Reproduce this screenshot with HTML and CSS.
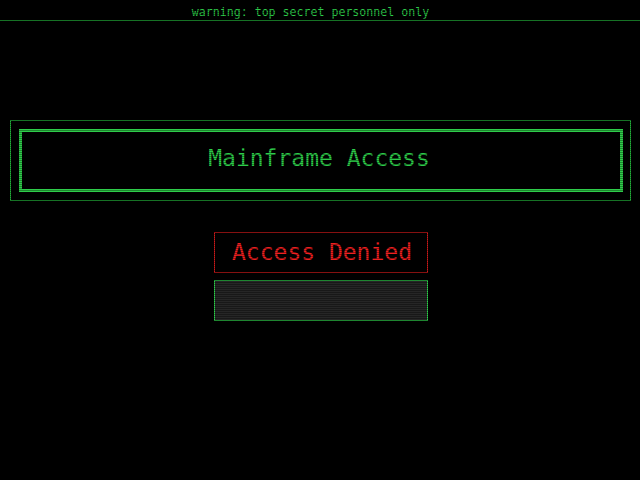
FILE: index.html
```html
<!DOCTYPE html>
<html lang="en">
<head>
<meta charset="utf-8">
<title>Mainframe Access</title>
<link rel="stylesheet" href="styles.css">
</head>
<body>
<div class="screen">
  <header class="warning">warning: top secret personnel only</header>
  <section class="frame">
    <div class="frame-inner">
      <h1 class="title">Mainframe Access</h1>
    </div>
  </section>
  <div class="status">Access Denied</div>
  <div class="input-box"></div>
</div>
<div class="scanlines"></div>
</body>
</html>
```

FILE: styles.css
```css
html, body {
  margin: 0;
  padding: 0;
  background: #000;
}

body {
  width: 640px;
  height: 480px;
  overflow: hidden;
  font-family: "DejaVu Sans Mono", "Liberation Mono", monospace;
}

.screen {
  display: flex;
  flex-direction: column;
  align-items: flex-start;
}

.warning {
  align-self: stretch;
  box-sizing: border-box;
  height: 21px;
  padding: 4px 19px 0 0;
  line-height: 17px;
  font-size: 11.6px;
  color: #2ecc4a;
  text-align: center;
  border-bottom: 1px solid #22b03a;
}

.frame {
  box-sizing: border-box;
  width: 621px;
  margin: 99px 0 0 10px;
  border: 1px solid #22b03a;
  padding: 8px 7px 8px 8px;
}

.frame-inner {
  box-sizing: border-box;
  height: 63px;
  border: 3px solid #2ecc4a;
  padding: 0 4px 5px 0;
}

.title {
  margin: 0;
  font-weight: normal;
  font-size: 23px;
  line-height: 52px;
  color: #2ecc4a;
  text-align: center;
}

.status {
  box-sizing: border-box;
  width: 214px;
  height: 41px;
  margin: 31px 0 0 214px;
  border: 1px solid #cc1a1a;
  padding-left: 17px;
  font-size: 23px;
  line-height: 39px;
  color: #f02020;
}

.input-box {
  box-sizing: border-box;
  width: 214px;
  height: 41px;
  margin: 7px 0 0 214px;
  border: 1px solid #2ecc4a;
  background: #262626;
}

.scanlines {
  position: fixed;
  inset: 0;
  pointer-events: none;
  background: repeating-linear-gradient(
    to bottom,
    rgba(0, 0, 0, 0.35) 0px,
    rgba(0, 0, 0, 0.35) 1px,
    transparent 1px,
    transparent 2px
  );
}
```
